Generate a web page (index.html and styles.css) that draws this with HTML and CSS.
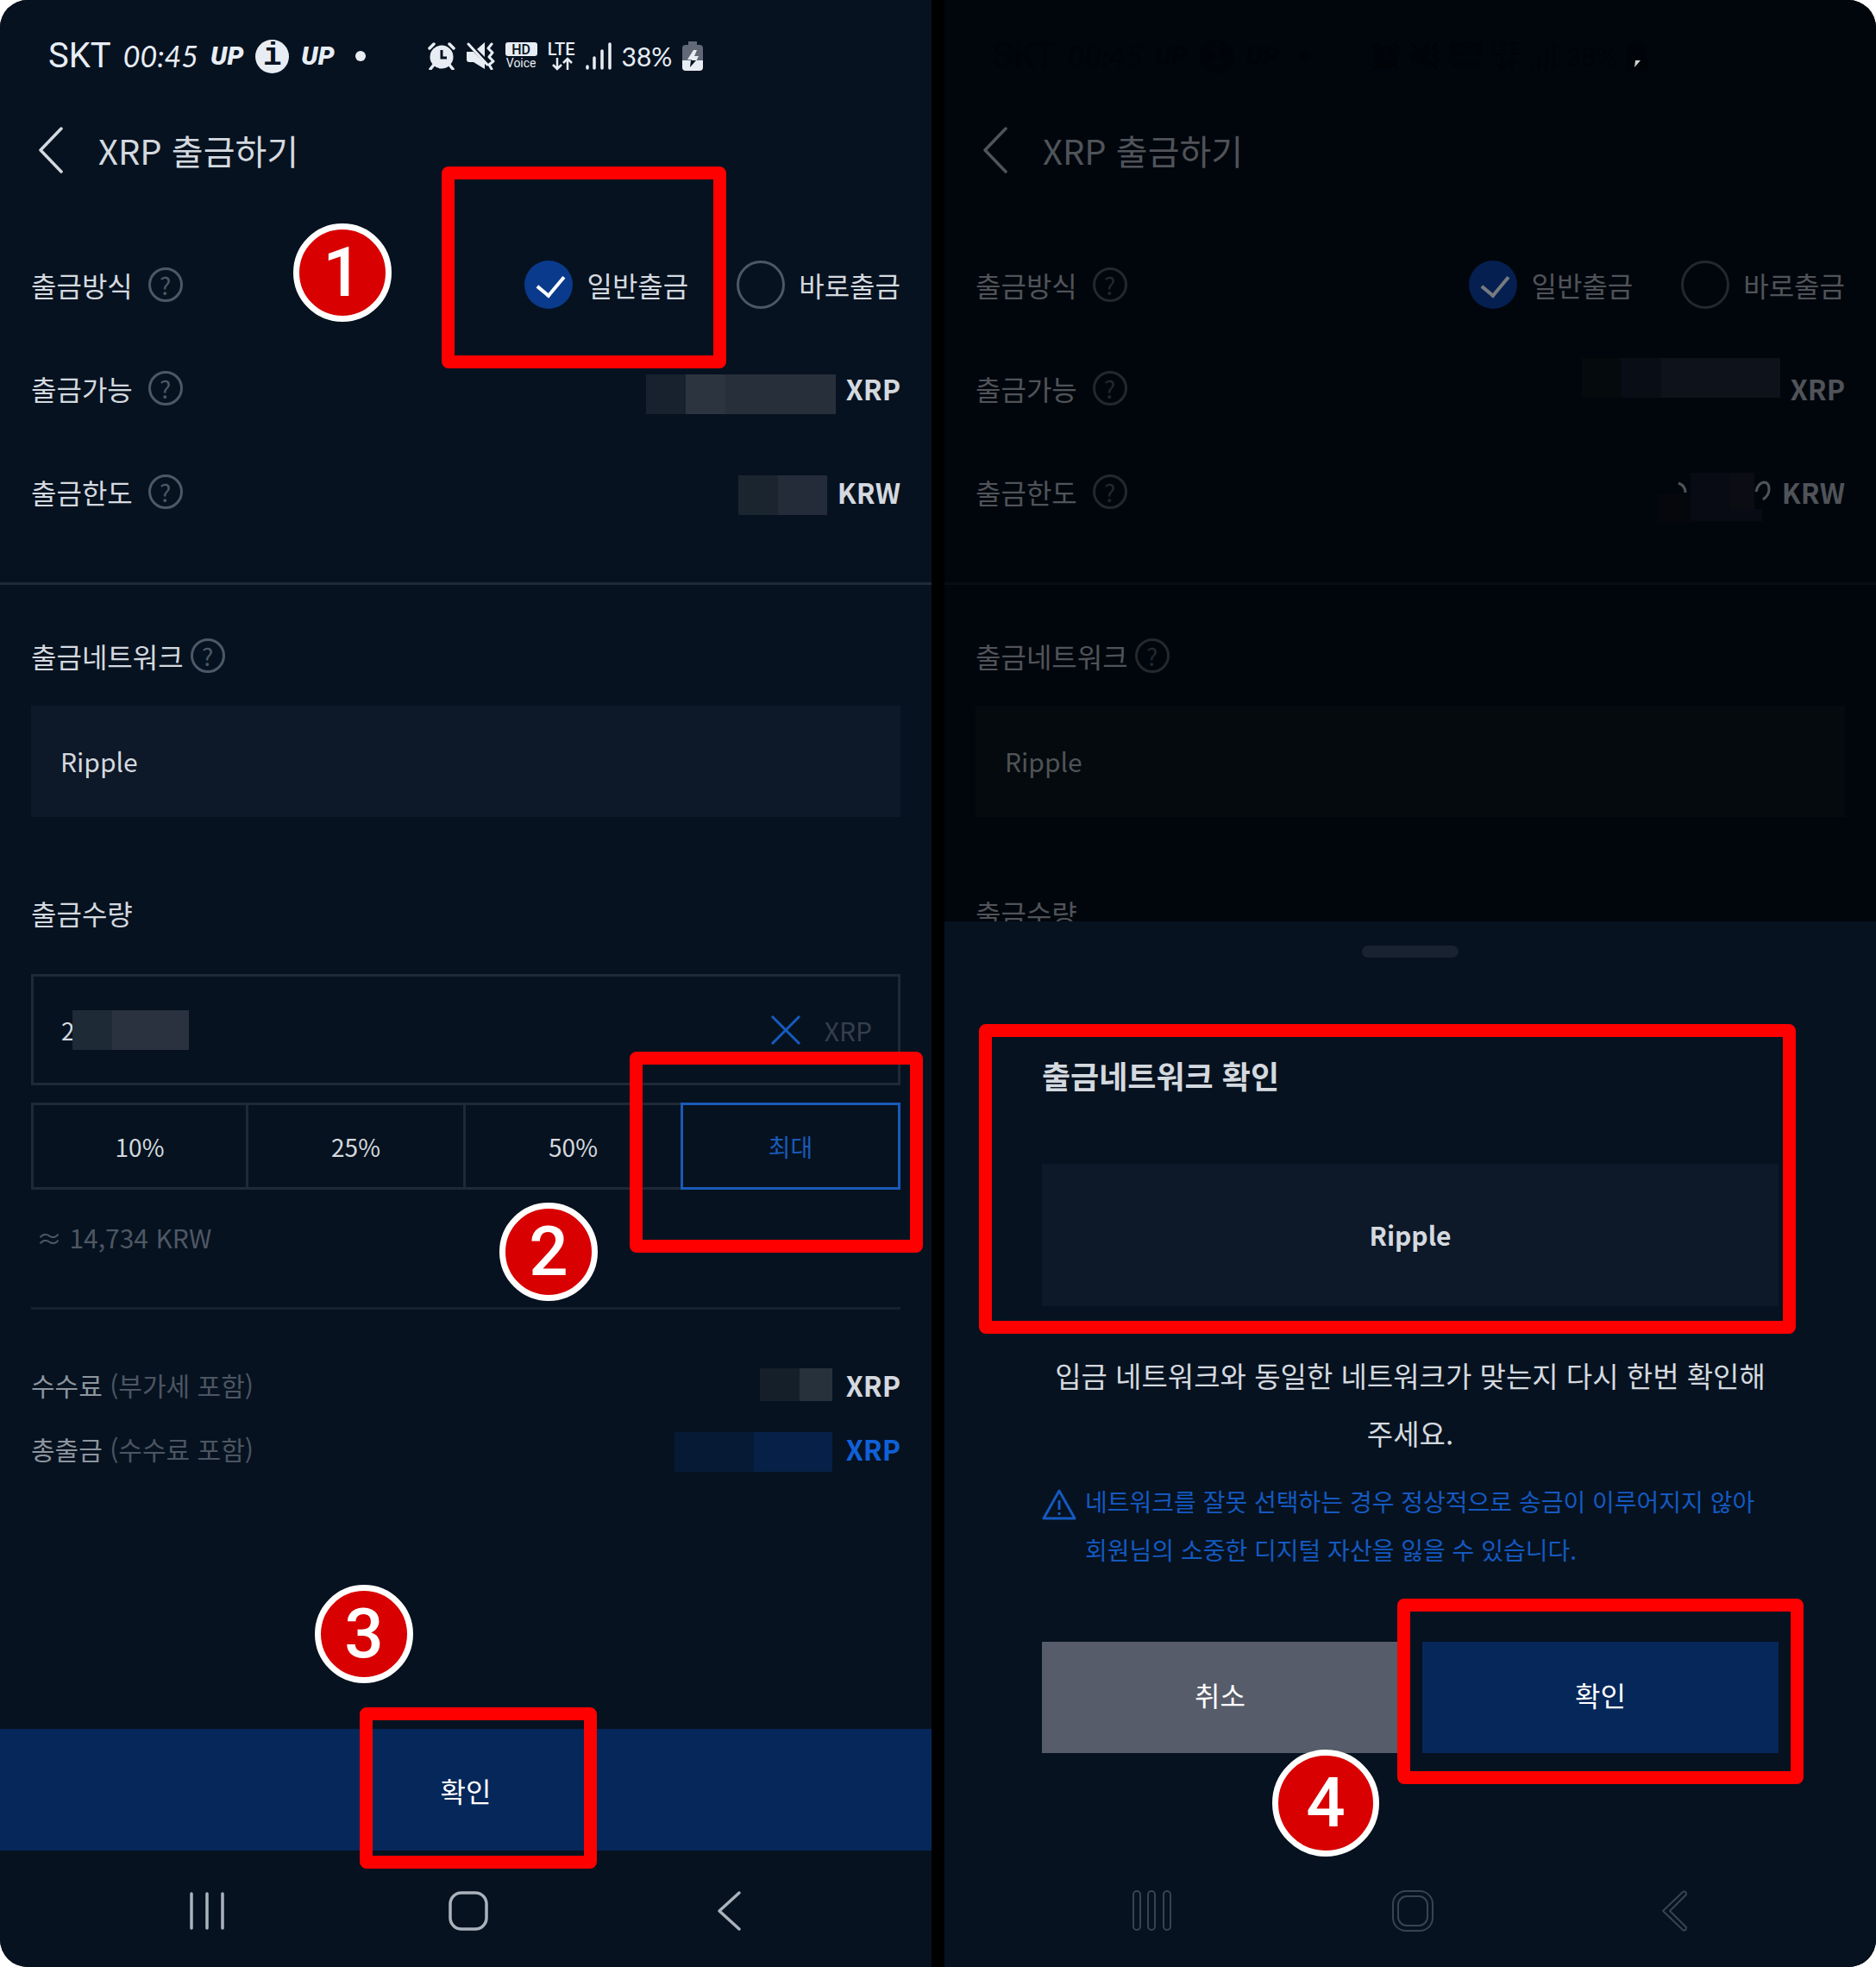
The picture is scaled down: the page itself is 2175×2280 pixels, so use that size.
FILE: index.html
```html
<!DOCTYPE html>
<html lang="ko">
<head>
  <meta charset="UTF-8">
  <meta name="viewport" content="width=device-width, initial-scale=1.0">
  <title>XRP 출금하기</title>
  <link rel="stylesheet" href="styles.css">
</head>
<body>
  <!-- Shared icons -->
  <svg class="symbols" aria-hidden="true">
    <symbol id="alarm" viewBox="0 0 32 32">
      <circle cx="16" cy="17" r="13.5" fill="currentColor"/>
      <path d="M2 7l5-5M30 7l-5-5M7 26l-4 5M25 26l4 5" stroke="currentColor" stroke-width="3.5" stroke-linecap="round"/>
      <path d="M16 9v9h6" fill="none" stroke="var(--bg)" stroke-width="3"/>
    </symbol>
    <symbol id="mute" viewBox="0 0 34 32">
      <path d="M1 11h8L22 24v7L9 23H4q-3 0-3-3z" fill="currentColor"/>
      <path d="M13 8l9-8v17z" fill="currentColor"/>
      <path d="M3 2l22 24" stroke="currentColor" stroke-width="3" stroke-linecap="round"/>
      <path d="M30 2l-4 5 5 5-4 5 5 5-5 4 3 5" fill="none" stroke="currentColor" stroke-width="3" stroke-linejoin="round" stroke-linecap="round"/>
    </symbol>
    <symbol id="arrows" viewBox="0 0 26 16">
      <path d="M8 1v13M3 9l5 5 5-5M20 15V2M15 7l5-5 5 5" fill="none" stroke="currentColor" stroke-width="2.5"/>
    </symbol>
    <symbol id="signal" viewBox="0 0 30 32">
      <path d="M2 28v2M10 18v12M19 10v20M28 2v28" stroke="currentColor" stroke-width="3.5" stroke-linecap="round"/>
    </symbol>
    <symbol id="battery" viewBox="0 0 24 34">
      <path d="M7 0h10v4h3q4 0 4 4v14H0V8q0-4 4-4h3z" fill="currentColor" opacity=".4"/>
      <path d="M0 22h24v8q0 4-4 4H4q-4 0-4-4z" fill="currentColor"/>
      <path d="M13 10L6 21h5v2h5l3-6h-5l3-7z" fill="currentColor"/>
      <path d="M10 22h6l-7 8z" fill="var(--flash)"/>
    </symbol>
    <symbol id="back" viewBox="0 0 30 54">
      <path d="M27 2L3 27l24 25" fill="none" stroke="currentColor" stroke-width="3.5" stroke-linecap="round" stroke-linejoin="round"/>
    </symbol>
  </svg>

  <main class="board">
    <!-- Withdraw form -->
    <section class="phone">
      <div class="status">
        <div class="notices">
          <span class="carrier">SKT</span>
          <span class="clock">00:45</span>
          <span class="up">UP</span>
          <span class="info">i</span>
          <span class="up">UP</span>
          <span class="dot"></span>
        </div>
        <div class="device">
          <svg class="alarm"><use href="#alarm"/></svg>
          <svg class="mute"><use href="#mute"/></svg>
          <span class="stack"><b class="hd">HD</b><span class="voice">Voice</span></span>
          <span class="stack"><span class="lte">LTE</span><svg class="arrows"><use href="#arrows"/></svg></span>
          <svg class="signal"><use href="#signal"/></svg>
          <span class="percent">38%</span>
          <svg class="battery"><use href="#battery"/></svg>
        </div>
      </div>

      <header class="header">
        <button class="back" aria-label="뒤로"><svg><use href="#back"/></svg></button>
        <h1>XRP 출금하기</h1>
      </header>

      <div class="rows">
        <div class="row">
          <span class="name">출금방식</span>
          <button class="help">?</button>
          <div class="options">
            <label class="option"><input type="radio" name="method" checked>일반출금<span class="frame frame-method"></span></label>
            <label class="option"><input type="radio" name="method">바로출금</label>
          </div>
        </div>
        <div class="row">
          <span class="name">출금가능</span>
          <button class="help">?</button>
          <span class="value"><i class="mosaic available"></i><b>XRP</b></span>
        </div>
        <div class="row">
          <span class="name">출금한도</span>
          <button class="help">?</button>
          <span class="value"><i class="mosaic limit"></i><b>KRW</b></span>
        </div>
      </div>

      <div class="form">
        <div class="title network">
          <span>출금네트워크</span>
          <button class="help">?</button>
        </div>
        <div class="field">Ripple</div>

        <label class="title quantity" for="amount">출금수량</label>
        <div class="amount">
          <input type="text" id="amount" value="2">
          <i class="mosaic typed"></i>
          <button class="clear" aria-label="지우기">
            <svg viewBox="0 0 34 34"><path d="M1 1l32 32M33 1L1 33" stroke="currentColor" stroke-width="3"/></svg>
          </button>
          <span class="unit">XRP</span>
        </div>
        <div class="ratios">
          <button>10%</button>
          <button>25%</button>
          <button>50%</button>
          <button class="active">최대<span class="frame frame-max"></span></button>
        </div>
        <p class="approx">≈ 14,734 KRW</p>

        <div class="fees">
          <div class="fee">
            <span>수수료 <small>(부가세 포함)</small></span>
            <span class="value"><i class="mosaic charge"></i><b>XRP</b></span>
          </div>
          <div class="fee">
            <span>총출금 <small>(수수료 포함)</small></span>
            <span class="value blue"><i class="mosaic total"></i><b>XRP</b></span>
          </div>
        </div>
      </div>

      <button class="confirm">확인<span class="frame frame-confirm"></span></button>

      <nav class="nav">
        <button aria-label="최근 앱"><svg viewBox="0 0 46 46"><path d="M4 3v40M22 3v40M40 3v40" stroke="currentColor" stroke-width="3.5" stroke-linecap="round"/></svg></button>
        <button aria-label="홈"><svg viewBox="0 0 46 46"><rect x="2" y="2" width="42" height="42" rx="13" fill="none" stroke="currentColor" stroke-width="3.5"/></svg></button>
        <button aria-label="뒤로"><svg viewBox="0 0 46 46"><path d="M35 2L12 23l23 21" fill="none" stroke="currentColor" stroke-width="3.5" stroke-linecap="round" stroke-linejoin="round"/></svg></button>
      </nav>

      <span class="step step-1">1</span>
      <span class="step step-2">2</span>
      <span class="step step-3">3</span>
    </section>

    <!-- Network check sheet -->
    <section class="phone dim">
      <div class="behind">
        <div class="status">
          <div class="notices">
            <span class="carrier">SKT</span>
            <span class="clock">00:45</span>
            <span class="up">UP</span>
            <span class="info">i</span>
            <span class="up">UP</span>
            <span class="dot"></span>
          </div>
          <div class="device">
            <svg class="alarm"><use href="#alarm"/></svg>
            <svg class="mute"><use href="#mute"/></svg>
            <span class="stack"><b class="hd">HD</b><span class="voice">Voice</span></span>
            <span class="stack"><span class="lte">LTE</span><svg class="arrows"><use href="#arrows"/></svg></span>
            <svg class="signal"><use href="#signal"/></svg>
            <span class="percent">38%</span>
            <svg class="battery"><use href="#battery"/></svg>
          </div>
        </div>

        <header class="header">
          <button class="back" aria-label="뒤로"><svg><use href="#back"/></svg></button>
          <h1>XRP 출금하기</h1>
        </header>

        <div class="rows">
          <div class="row">
            <span class="name">출금방식</span>
            <button class="help">?</button>
            <div class="options">
              <label class="option"><input type="radio" name="method2" checked>일반출금</label>
              <label class="option"><input type="radio" name="method2">바로출금</label>
            </div>
          </div>
          <div class="row">
            <span class="name">출금가능</span>
            <button class="help">?</button>
            <span class="value"><i class="mosaic available"></i><b>XRP</b></span>
          </div>
          <div class="row">
            <span class="name">출금한도</span>
            <button class="help">?</button>
            <span class="value">
              <svg class="covered" viewBox="0 0 132 58" aria-hidden="true">
                <path d="M0 25h45v33H0z" fill="#06070d"/>
                <path d="M38 0h74v42h9v14H38z" fill="#080b13"/>
                <path d="M84 0h28v42H84z" fill="#0b0d12"/>
                <path d="M24 12q8 3 8 11M114 22q2-10 9-11 6 0 6 8 0 7-7 12" fill="none" stroke="#505358" stroke-width="3"/>
              </svg>
              <b>KRW</b>
            </span>
          </div>
        </div>

        <div class="form">
          <div class="title network">
            <span>출금네트워크</span>
            <button class="help">?</button>
          </div>
          <div class="field">Ripple</div>
          <div class="title quantity">출금수량</div>
        </div>
      </div>

      <div class="sheet">
        <div class="handle"></div>
        <div class="check">
          <h2>출금네트워크 확인</h2>
          <div class="chosen">Ripple</div>
          <span class="frame frame-check"></span>
        </div>
        <p class="message">입금 네트워크와 동일한 네트워크가 맞는지 다시 한번 확인해<br>주세요.</p>
        <div class="warning">
          <svg viewBox="0 0 40 36"><path d="M20 2L2 34h36z" fill="none" stroke="currentColor" stroke-width="3" stroke-linejoin="round"/><path d="M20 13v11M20 27v3" stroke="currentColor" stroke-width="3"/></svg>
          <p>네트워크를 잘못 선택하는 경우 정상적으로 송금이 이루어지지 않아<br>회원님의 소중한 디지털 자산을 잃을 수 있습니다.</p>
        </div>
        <div class="actions">
          <button class="cancel">취소</button>
          <button class="ok">확인<span class="frame frame-ok"></span></button>
          <span class="step step-4">4</span>
        </div>
      </div>

      <nav class="nav">
        <button aria-label="최근 앱"><svg viewBox="0 0 46 46"><g fill="none" stroke="currentColor" stroke-width="2"><rect x="1" y="0" width="8" height="45" rx="4"/><rect x="18" y="0" width="8" height="45" rx="4"/><rect x="36" y="0" width="8" height="45" rx="4"/></g></svg></button>
        <button aria-label="홈"><svg viewBox="0 0 46 46"><g fill="none" stroke="currentColor" stroke-width="2"><rect x="0" y="0" width="46" height="46" rx="15"/><rect x="6" y="6" width="34" height="34" rx="10"/></g></svg></button>
        <button aria-label="뒤로"><svg viewBox="0 0 46 46"><path d="M34 1q4-2 4 3L19 23l19 19q0 5-4 3L11 23z" fill="none" stroke="currentColor" stroke-width="2" stroke-linejoin="round"/></svg></button>
      </nav>
    </section>
  </main>
</body>
</html>
```

FILE: styles.css
```css
* {
  box-sizing: border-box;
}
body {
  margin: 0;
  background: #fff;
  font-family: "Noto Sans CJK KR", sans-serif;
}
h1, h2, p {
  margin: 0;
  font-weight: normal;
}
button {
  padding: 0;
  border: none;
  background: none;
  color: inherit;
  font: inherit;
}
svg {
  display: block;
  overflow: visible;
}
.symbols {
  position: absolute;
  width: 0;
  height: 0;
}

.board {
  display: grid;
  grid-template-columns: 1fr 1fr;
  gap: 15px;
  min-height: 100vh;
  background: #000;
  border-radius: 32px;
  overflow: hidden;
}
.phone {
  --bg: #061220;
  --text: #d4d9df;
  --soft: #4d5866;
  --line: #1f2937;
  --field: #0d1828;
  --check: #0a3a8c;
  --tick: #fff;
  --status: #e8edf4;
  --flash: #061220;
  position: relative;
  display: flex;
  flex-direction: column;
  background: var(--bg);
  color: var(--text);
  font-size: 32px;
  line-height: 60px;
}
.dim {
  --bg: #01060d;
  --text: #505358;
  --soft: #24282c;
  --line: #060d15;
  --field: #040a0e;
  --check: #051f50;
  --tick: #777b80;
  --status: #000307;
  --flash: #d0d0d0;
}

/* Status bar */
.status {
  display: flex;
  gap: 72px;
  height: 130px;
  padding-left: 56px;
  color: var(--status);
}
.notices, .device {
  display: flex;
  align-items: center;
  gap: 14px;
}
.device {
  gap: 12px;
}
.carrier {
  font-family: Roboto, sans-serif;
  font-size: 40px;
}
.clock {
  font-family: Lato, sans-serif;
  font-size: 34px;
  font-style: italic;
}
.up {
  font-family: Roboto, sans-serif;
  font-size: 30px;
  font-weight: 900;
  font-style: italic;
}
.info {
  width: 39px;
  height: 39px;
  border-radius: 50%;
  background: var(--status);
  color: var(--bg);
  font-family: "Liberation Mono", monospace;
  font-size: 36px;
  font-weight: bold;
  line-height: 39px;
  text-align: center;
}
.dot {
  width: 12px;
  height: 12px;
  margin-left: 10px;
  border-radius: 50%;
  background: var(--status);
}
.alarm {
  width: 32px;
  height: 32px;
}
.mute {
  width: 34px;
  height: 32px;
}
.stack {
  display: flex;
  flex-direction: column;
  align-items: center;
  font-family: Roboto, sans-serif;
}
.hd {
  width: 37px;
  height: 16px;
  border-radius: 3px;
  background: var(--status);
  color: var(--bg);
  font-size: 16px;
  font-weight: 500;
  line-height: 17px;
  text-align: center;
}
.voice {
  font-size: 14px;
  line-height: 16px;
}
.lte {
  font-size: 20px;
  font-weight: 500;
  line-height: 17px;
}
.arrows {
  width: 26px;
  height: 16px;
}
.signal {
  width: 30px;
  height: 32px;
}
.percent {
  font-family: Lato, sans-serif;
  font-size: 30px;
}
.battery {
  width: 24px;
  height: 34px;
}

/* Header and info rows */
.header {
  display: flex;
  align-items: center;
  gap: 40px;
  height: 88px;
  padding-left: 44px;
}
.header h1 {
  font-size: 40px;
}
.back svg {
  width: 30px;
  height: 54px;
}
.rows {
  padding: 52px 36px 45px;
  border-bottom: 3px solid var(--line);
}
.row {
  display: flex;
  align-items: center;
  gap: 18px;
  height: 120px;
}
.help {
  width: 40px;
  height: 40px;
  border: 3px solid var(--soft);
  border-radius: 50%;
  color: var(--soft);
  font-size: 28px;
  line-height: 34px;
}
.options {
  display: flex;
  gap: 56px;
  margin-left: auto;
}
.option {
  position: relative;
  display: flex;
  align-items: center;
  gap: 16px;
  height: 56px;
}
.option input {
  position: relative;
  appearance: none;
  width: 56px;
  height: 56px;
  margin: 0;
  border: 3px solid var(--soft);
  border-radius: 50%;
}
.option input:checked {
  border: none;
  background: var(--check);
}
.option input:checked::after {
  content: "";
  position: absolute;
  left: 21px;
  top: 11px;
  width: 15px;
  height: 26px;
  border: solid var(--tick);
  border-width: 0 4px 4px 0;
  transform: rotate(40deg);
}
.value {
  display: flex;
  align-items: center;
  gap: 12px;
  margin-left: auto;
}

/* Hidden amounts */
.mosaic {
  height: 46px;
}
.available {
  width: 220px;
  margin-top: 14px;
  background: linear-gradient(90deg, #18222e 46px, #2b343f 46px 92px, #272f3a 92px);
}
.limit {
  width: 103px;
  margin-top: 8px;
  background: linear-gradient(90deg, #1b2530 46px, #232c38 46px);
}
.typed {
  width: 135px;
  background: linear-gradient(90deg, #1e2a36 46px, #29323e 46px);
}
.charge {
  width: 84px;
  height: 38px;
  margin-right: 4px;
  background: linear-gradient(90deg, #151f2a 46px, #27313c 46px);
}
.total {
  width: 183px;
  margin: 8px 4px 0 0;
  background: linear-gradient(90deg, #061a36 92px, #062047 92px);
}
.dim .available {
  width: 230px;
  margin: 0 0 24px;
  background: linear-gradient(90deg, #050a0d 46px, #090d16 46px 92px, #0e121a 92px);
}
.covered {
  width: 132px;
  height: 58px;
  margin-top: 14px;
}

/* Form */
.form {
  padding: 0 36px;
}
.title {
  display: flex;
  align-items: center;
  gap: 8px;
}
.network {
  margin: 52px 0 28px;
}
.quantity {
  margin: 81px 0 41px;
}
.field {
  padding: 0 34px;
  background: var(--field);
  font-size: 30px;
  line-height: 129px;
}
.amount {
  display: flex;
  align-items: center;
  height: 129px;
  padding: 0 30px 0 32px;
  border: 3px solid var(--line);
}
.amount input {
  width: 13px;
  padding: 0;
  border: none;
  background: none;
  color: var(--text);
  font: inherit;
  font-size: 28px;
}
.clear {
  margin: 0 28px 0 auto;
  color: #155cc0;
}
.clear svg {
  width: 34px;
  height: 34px;
}
.unit {
  color: #353e4b;
  font-size: 30px;
}
.ratios {
  display: grid;
  grid-template-columns: repeat(4, 1fr);
  margin-top: 20px;
}
.ratios button {
  position: relative;
  height: 101px;
  margin-left: -3px;
  border: 3px solid var(--line);
  font-size: 28px;
}
.ratios button:first-child {
  margin-left: 0;
}
.ratios .active {
  border-color: #1a5ab8;
  color: #1a5ab8;
}
.approx {
  padding: 25px 6px 51px;
  border-bottom: 3px solid #172130;
  color: #4e5763;
  font-size: 30px;
}
.fees {
  padding-top: 50px;
}
.fee {
  display: flex;
  align-items: center;
  height: 74px;
  color: #8e959e;
  font-size: 30px;
}
.fee small {
  color: #4c5562;
  font-size: 30px;
}
.fee b {
  color: var(--text);
  font-size: 32px;
}
.fee .blue b {
  color: #1060d8;
}
.confirm, .ok {
  position: relative;
  background: #06275a;
  color: #fff;
}
.confirm {
  height: 141px;
  margin-top: auto;
}
.nav {
  display: flex;
  justify-content: space-between;
  align-items: center;
  height: 135px;
  padding: 4px 212px 0 218px;
  color: #aab2bc;
}
.nav svg {
  width: 46px;
  height: 46px;
}

/* Bottom sheet */
.behind {
  height: 1068px;
  overflow: hidden;
}
.sheet {
  flex: 1;
  padding: 28px 113px 0;
  background: #061220;
  color: #d4d9df;
}
.handle {
  width: 112px;
  height: 14px;
  margin: 0 auto;
  border-radius: 7px;
  background: #182231;
}
.check {
  position: relative;
  margin-top: 106px;
}
.check h2 {
  font-size: 36px;
  font-weight: bold;
}
.chosen {
  margin-top: 73px;
  background: #0d1828;
  font-size: 30px;
  font-weight: bold;
  line-height: 165px;
  text-align: center;
}
.message {
  margin-top: 47px;
  font-size: 33px;
  line-height: 67px;
  text-align: center;
}
.warning {
  display: flex;
  gap: 10px;
  margin-top: 17px;
  color: #1559c0;
  font-size: 28px;
  line-height: 56px;
}
.warning svg {
  flex: none;
  width: 40px;
  height: 36px;
  margin-top: 14px;
}
.actions {
  position: relative;
  display: grid;
  grid-template-columns: 1fr 1fr;
  gap: 28px;
  margin-top: 79px;
}
.actions button {
  height: 129px;
  padding-bottom: 8px;
}
.cancel {
  background: #565c69;
  color: #fff;
}
.dim .nav {
  background: #061220;
  color: #39434f;
}

/* Guide marks */
.frame {
  position: absolute;
  z-index: 1;
  border: 15px solid #f00;
  border-radius: 8px;
}
.frame-method {
  inset: -109px -44px -69px -96px;
}
.frame-max {
  inset: -62px -29px -76px -62px;
}
.frame-confirm {
  top: -25px;
  bottom: -21px;
  left: calc(50% - 123px);
  width: 275px;
}
.frame-check {
  inset: -29px -20px -32px -73px;
}
.frame-ok {
  inset: -50px -29px -36px -29px;
}
.step {
  position: absolute;
  z-index: 2;
  width: 114px;
  height: 114px;
  border: 7px solid #fff;
  border-radius: 50%;
  background: #d80000;
  color: #fff;
  font-family: Roboto, sans-serif;
  font-size: 80px;
  font-weight: 500;
  line-height: 100px;
  text-align: center;
}
.step-1 {
  left: 340px;
  top: 259px;
}
.step-2 {
  left: 579px;
  top: 1394px;
}
.step-3 {
  left: 365px;
  top: 1837px;
}
.step-4 {
  left: 267px;
  top: 125px;
  width: 124px;
  height: 124px;
  line-height: 110px;
}
```
